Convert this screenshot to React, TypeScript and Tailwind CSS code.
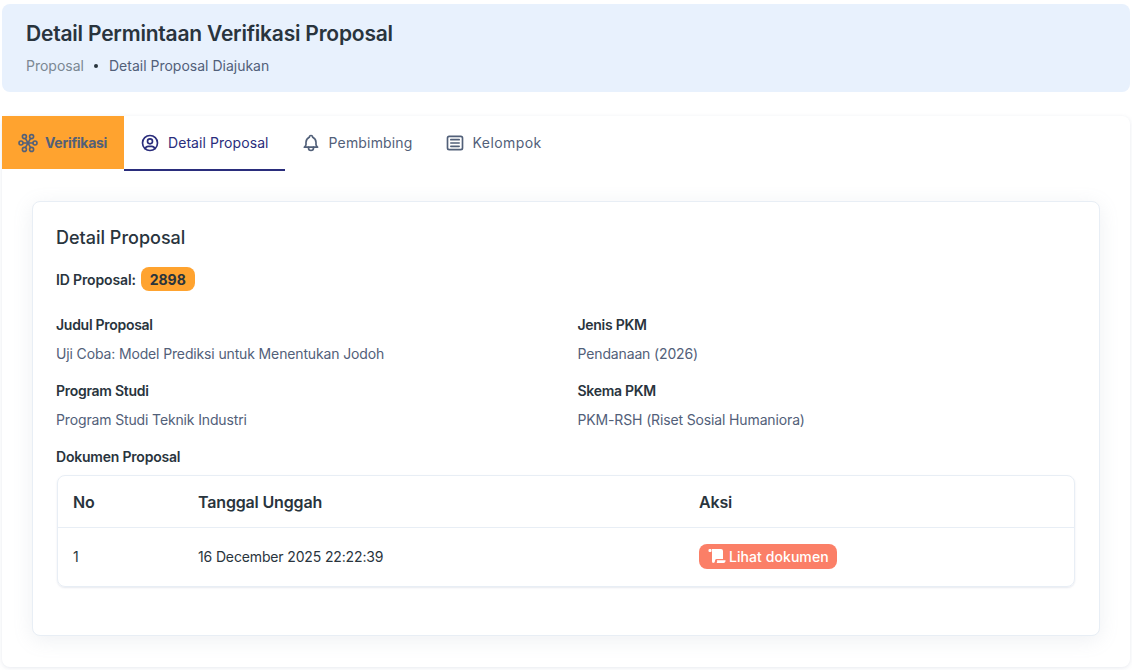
import { TbArticle, TbBell, TbUserCircle } from "react-icons/tb";
import type { ReactNode } from "react";

function FlowerIcon() {
  return (
    <svg width="20" height="20" viewBox="0 0 20 20" fill="none" stroke="currentColor" strokeWidth="1.6">
      <circle cx="6.4" cy="3.6" r="2" />
      <circle cx="13.6" cy="3.6" r="2" />
      <circle cx="3" cy="10" r="2" />
      <circle cx="17" cy="10" r="2" />
      <circle cx="6.4" cy="16.4" r="2" />
      <circle cx="13.6" cy="16.4" r="2" />
      <path d="M7.4 5.4 12.6 14.6M12.6 5.4 7.4 14.6M5 10h10" />
    </svg>
  );
}

function ScrollIcon() {
  return (
    <svg width="18" height="18" viewBox="0 0 18 18" fill="currentColor">
      <rect x="0.5" y="2" width="3" height="3" rx="1" />
      <path d="M4 2h9a2 2 0 0 1 2 2v8h-6.5a1.5 1.5 0 0 0-1.5 1.5V14a2 2 0 0 1-2 2 2 2 0 0 1-1-1.5z" />
      <path d="M9 13.2h8.5v1a2 2 0 0 1-2 1.8H8.6a3 3 0 0 0 .4-2.8z" />
    </svg>
  );
}

function Tab({ icon, label, active, tracking }: { icon: ReactNode; label: string; active?: boolean; tracking: string }) {
  return (
    <button
      className={`flex h-[55px] items-center gap-2 border-b-2 px-4 text-sm ${tracking} ${
        active ? "border-[#2a2d7c] text-[#2a2d7c]" : "border-transparent text-[#526079]"
      }`}
    >
      {icon}
      {label}
    </button>
  );
}

function Field({ label, value }: { label: string; value: string }) {
  return (
    <div className="mb-[17px]">
      <div className="mb-[9px] text-[14px] leading-[20px] font-semibold tracking-[-0.02em] text-[#29343d]">{label}</div>
      <div className="text-[14px] leading-[20px] tracking-[-0.01em] text-[#526079]">{value}</div>
    </div>
  );
}

export default function App() {
  return (
    <div className="min-h-[670px] bg-white font-['Inter',sans-serif]">
      <div className="px-[2px] pt-1">
        {/* Header */}
        <div className="h-[88px] rounded-lg bg-[#e8f1fd] px-6 pt-[17px]">
          <h1 className="text-[21px] leading-[25px] font-semibold tracking-[-0.01em] text-[#29343d]">
            Detail Permintaan Verifikasi Proposal
          </h1>
          <div className="mt-[10px] flex items-center text-[14px] leading-[20px]">
            <span className="text-[#7b8893]">Proposal</span>
            <span className="mr-[11px] ml-[10px] h-1 w-1 rounded-full bg-[#29343d]" />
            <span className="text-[#526079]">Detail Proposal Diajukan</span>
          </div>
        </div>

        {/* Tabs + card */}
        <div className="mt-6 h-[551px] rounded-lg bg-white shadow-[0_1px_4px_rgba(133,146,173,0.2)]">
          <div className="flex items-start">
            <button className="flex h-[53px] w-[122px] items-center gap-[7px] bg-[#ffa32f] pl-4 text-sm font-bold tracking-[-0.02em] text-[#526079]">
              <FlowerIcon />
              Verifikasi
            </button>
            <Tab active tracking="tracking-[0.005em]" icon={<TbUserCircle size={20} />} label="Detail Proposal" />
            <Tab tracking="tracking-[0.012em]" icon={<TbBell size={20} />} label="Pembimbing" />
            <Tab tracking="tracking-[0.03em]" icon={<TbArticle size={20} />} label="Kelompok" />
          </div>

          <div className="mx-[30px] mt-[30px] h-[435px] rounded-lg border border-[#e8eef5] bg-white px-[23px] pt-6 shadow-[0_4px_20px_rgba(133,146,173,0.14)]">
            <h2 className="text-[18px] leading-[24px] font-medium text-[#29343d]">Detail Proposal</h2>

            <div className="mt-[17px] flex items-center text-[14px] font-semibold tracking-[-0.01em] text-[#29343d]">
              ID Proposal:
              <span className="ml-[5px] flex h-6 w-[54px] items-center justify-center rounded-lg bg-[#ffa32f] font-bold tracking-normal">
                2898
              </span>
            </div>

            <div className="mt-6 grid grid-cols-2 gap-x-[23px]">
              <Field label="Judul Proposal" value="Uji Coba: Model Prediksi untuk Menentukan Jodoh" />
              <Field label="Jenis PKM" value="Pendanaan (2026)" />
              <Field label="Program Studi" value="Program Studi Teknik Industri" />
              <Field label="Skema PKM" value="PKM-RSH (Riset Sosial Humaniora)" />
            </div>

            <div className="text-[14px] leading-[20px] font-semibold tracking-[-0.015em] text-[#29343d]">Dokumen Proposal</div>

            <div className="mx-[1px] mt-2 rounded-lg border border-[#e8eef5] shadow-[0_1px_2px_rgba(133,146,173,0.2)]">
              <div className="grid h-[52px] grid-cols-[125px_501px_1fr] items-center border-b border-[#e8eef5] pl-[15px] text-[16px] font-semibold tracking-[-0.01em] text-[#29343d]">
                <div>No</div>
                <div>Tanggal Unggah</div>
                <div>Aksi</div>
              </div>
              <div className="grid h-[58px] grid-cols-[125px_501px_1fr] items-center pl-[15px] text-[14px] tracking-[-0.01em] text-[#29343d]">
                <div className="pb-[2px]">1</div>
                <div className="pb-[2px]">16 December 2025 22:22:39</div>
                <div>
                  <span className="inline-flex h-[25px] w-[138px] items-center gap-[3px] rounded-lg bg-[#fb7f67] pl-[9px] text-[14px] font-medium tracking-[0.005em] text-white">
                    <ScrollIcon />
                    Lihat dokumen
                  </span>
                </div>
              </div>
            </div>
          </div>
        </div>
      </div>
    </div>
  );
}
